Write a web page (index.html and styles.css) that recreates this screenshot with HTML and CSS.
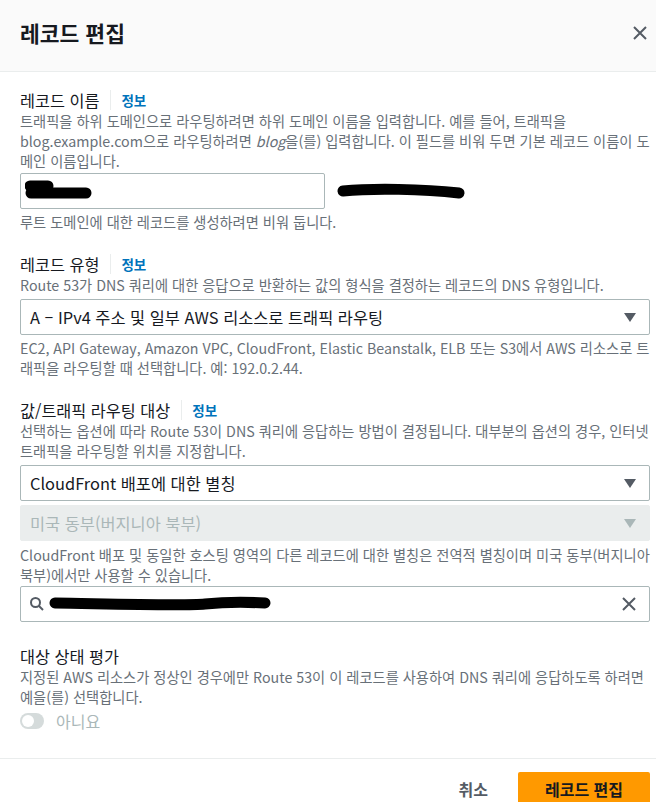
FILE: index.html
```html
<!DOCTYPE html>
<html lang="ko">
<head>
  <meta charset="UTF-8" />
  <meta name="viewport" content="width=device-width, initial-scale=1.0" />
  <title>레코드 편집</title>
  <link rel="stylesheet" href="styles.css">
</head>
<body>
  <div class="modal">
    <div class="modal-header">
      <h2>레코드 편집</h2>
      <button class="icon-btn" aria-label="닫기">
        <svg width="16" height="16" viewBox="0 0 16 16"><path d="M2 2l12 12M14 2L2 14" /></svg>
      </button>
    </div>

    <div class="modal-body">
      <!-- 레코드 이름 -->
      <div class="field">
        <div class="label-row"><span class="label">레코드 이름</span><span class="info">정보</span></div>
        <p class="desc">트래픽을 하위 도메인으로 라우팅하려면 하위 도메인 이름을 입력합니다. 예를 들어, 트래픽을 blog.example.com으로 라우팅하려면 <i>blog</i>을(를) 입력합니다. 이 필드를 비워 두면 기본 레코드 이름이 도메인 이름입니다.</p>
        <div class="name-row">
          <div class="input name-input">
            <svg class="redact" width="70" height="24" viewBox="0 0 70 24"><path d="M5 7h18M6 14h55" /></svg>
          </div>
          <svg class="redact" width="130" height="20" viewBox="0 0 130 20"><path d="M6 10c30-3 80-2 116 2" /></svg>
        </div>
        <p class="hint">루트 도메인에 대한 레코드를 생성하려면 비워 둡니다.</p>
      </div>

      <!-- 레코드 유형 -->
      <div class="field">
        <div class="label-row"><span class="label">레코드 유형</span><span class="info">정보</span></div>
        <p class="desc">Route 53가 DNS 쿼리에 대한 응답으로 반환하는 값의 형식을 결정하는 레코드의 DNS 유형입니다.</p>
        <div class="select">
          <span>A – IPv4 주소 및 일부 AWS 리소스로 트래픽 라우팅</span>
          <span class="caret"></span>
        </div>
        <p class="hint">EC2, API Gateway, Amazon VPC, CloudFront, Elastic Beanstalk, ELB 또는 S3에서 AWS 리소스로 트래픽을 라우팅할 때 선택합니다. 예: 192.0.2.44.</p>
      </div>

      <!-- 값/트래픽 라우팅 대상 -->
      <div class="field">
        <div class="label-row"><span class="label">값/트래픽 라우팅 대상</span><span class="info">정보</span></div>
        <p class="desc">선택하는 옵션에 따라 Route 53이 DNS 쿼리에 응답하는 방법이 결정됩니다. 대부분의 옵션의 경우, 인터넷 트래픽을 라우팅할 위치를 지정합니다.</p>
        <div class="select">
          <span>CloudFront 배포에 대한 별칭</span>
          <span class="caret"></span>
        </div>
        <div class="select disabled">
          <span>미국 동부(버지니아 북부)</span>
          <span class="caret"></span>
        </div>
        <p class="hint">CloudFront 배포 및 동일한 호스팅 영역의 다른 레코드에 대한 별칭은 전역적 별칭이며 미국 동부(버지니아 북부)에서만 사용할 수 있습니다.</p>
        <div class="input search">
          <svg class="search-icon" width="16" height="16" viewBox="0 0 16 16"><circle cx="6.5" cy="6.5" r="4.5" /><path d="M10 10l4 4" /></svg>
          <svg class="redact" width="230" height="20" viewBox="0 0 230 20"><path d="M6 9c60 1 130 3 150 1c20-2 40-2 60-1" /></svg>
          <svg class="clear" width="16" height="16" viewBox="0 0 16 16"><path d="M2 2l12 12M14 2L2 14" /></svg>
        </div>
      </div>

      <!-- 대상 상태 평가 -->
      <div class="field">
        <div class="label-row"><span class="label">대상 상태 평가</span></div>
        <p class="desc">지정된 AWS 리소스가 정상인 경우에만 Route 53이 이 레코드를 사용하여 DNS 쿼리에 응답하도록 하려면 예을(를) 선택합니다.</p>
        <div class="toggle-row">
          <span class="toggle"><span class="knob"></span></span>
          <span>아니요</span>
        </div>
      </div>
    </div>

    <div class="modal-footer">
      <button class="btn-link">취소</button>
      <button class="btn-primary">레코드 편집</button>
    </div>
  </div>
</body>
</html>
```

FILE: styles.css
```css
:root {
  --text: #16191f;
  --grau: #687078;
  --dunkel: #545b64;
  --rand: #aab7b8;
  --linie: #eaeded;
  --blau: #0073bb;
  --orange: #ff9900;
}

* {
  box-sizing: border-box;
  margin: 0;
  padding: 0;
}

body {
  font-family: "Noto Sans CJK KR", "Noto Sans", sans-serif;
  color: var(--text);
  background: #ffffff;
  overflow: hidden;
}

.modal-header {
  height: 72px;
  background: #fafafa;
  border-bottom: 1px solid var(--linie);
  display: flex;
  align-items: center;
  justify-content: space-between;
  padding: 0 8px 6px 20px;
}

.modal-header h2 {
  font-size: 21.5px;
  font-weight: 700;
}

.icon-btn {
  background: none;
  border: none;
  display: flex;
}

.icon-btn svg,
.clear {
  fill: none;
  stroke: var(--dunkel);
  stroke-width: 2;
}

.modal-body {
  padding: 17px 6px 25px 20px;
  display: flex;
  flex-direction: column;
  gap: 21px;
}

.field:last-child {
  margin-top: 2px;
}

.label-row {
  display: flex;
  align-items: center;
  height: 22px;
}

.label {
  font-size: 16.3px;
}

.info {
  font-size: 13.5px;
  font-weight: 700;
  color: var(--blau);
  border-left: 1px solid var(--linie);
  margin-left: 11px;
  padding-left: 10px;
  line-height: 20px;
}

.desc,
.hint {
  font-size: 14.25px;
  line-height: 20px;
  color: var(--grau);
}

.hint {
  margin-top: 3px;
}

.name-row {
  display: flex;
  align-items: center;
  gap: 12px;
  margin-top: 2px;
}

.input {
  height: 36px;
  border: 1px solid var(--rand);
  border-radius: 2px;
  display: flex;
  align-items: center;
}

.name-input {
  width: 305px;
  padding-left: 4px;
}

.redact path {
  fill: none;
  stroke: #000;
  stroke-width: 11;
  stroke-linecap: round;
}

.select {
  height: 36px;
  border: 1px solid var(--rand);
  border-radius: 2px;
  display: flex;
  align-items: center;
  justify-content: space-between;
  padding: 0 13px 0 9px;
  font-size: 16.4px;
  margin-top: 4px;
}

.caret {
  width: 0;
  height: 0;
  border-left: 6px solid transparent;
  border-right: 6px solid transparent;
  border-top: 9px solid var(--dunkel);
}

.select.disabled {
  background: var(--linie);
  border-color: var(--linie);
  color: var(--rand);
  margin-top: 4px;
}

.select.disabled .caret {
  border-top-color: var(--rand);
}

.select.disabled + .hint {
  margin-top: 4px;
}

.search {
  margin-top: 1px;
  padding: 0 12px 0 8px;
  gap: 4px;
}

.search-icon {
  fill: none;
  stroke: var(--dunkel);
  stroke-width: 2;
}

.clear {
  margin-left: auto;
}

.toggle-row {
  display: flex;
  align-items: center;
  gap: 12px;
  margin-top: 2px;
  font-size: 16px;
  color: var(--rand);
}

.toggle {
  width: 24px;
  height: 16px;
  border-radius: 8px;
  background: #d5dbdb;
  display: flex;
  align-items: center;
  padding: 2px;
}

.knob {
  width: 12px;
  height: 12px;
  border-radius: 50%;
  background: #ffffff;
}

.modal-footer {
  border-top: 1px solid var(--linie);
  display: flex;
  justify-content: flex-end;
  align-items: center;
  gap: 30px;
  padding: 13px 6px 0 20px;
}

.btn-link {
  background: none;
  border: none;
  font: inherit;
  font-size: 16px;
  font-weight: 700;
  color: var(--dunkel);
}

.btn-primary {
  font: inherit;
  font-size: 16px;
  font-weight: 700;
  color: var(--text);
  background: var(--orange);
  border: none;
  border-radius: 2px;
  width: 132px;
  height: 34px;
}
```
